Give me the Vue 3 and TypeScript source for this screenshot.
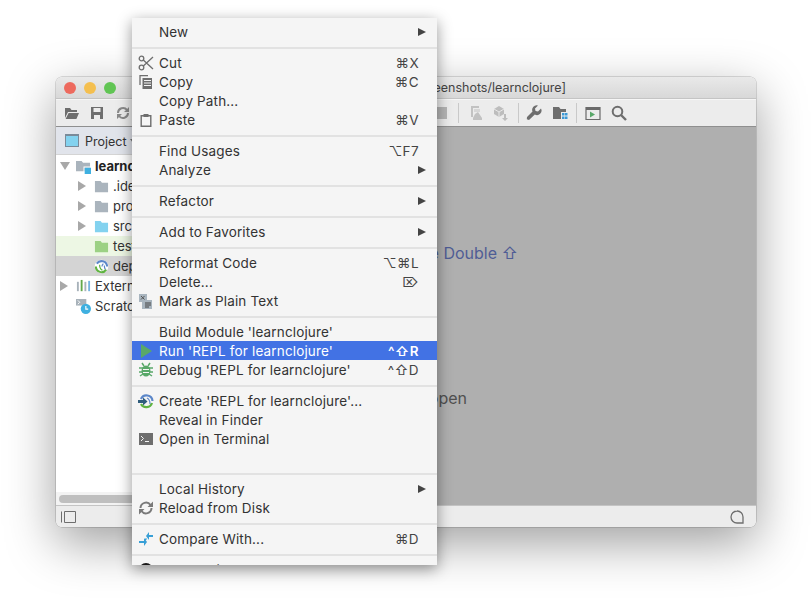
<script setup lang="ts">
interface Item { label?: string; icon?: string; key?: string; sub?: boolean; active?: boolean; blank?: boolean; sep?: boolean }
const items: Item[] = [
  { label: 'New', sub: true }, { sep: true },
  { label: 'Cut', icon: 'cut', key: '⌘X' },
  { label: 'Copy', icon: 'copy', key: '⌘C' },
  { label: 'Copy Path...' },
  { label: 'Paste', icon: 'paste', key: '⌘V' }, { sep: true },
  { label: 'Find Usages', key: '⌥F7' },
  { label: 'Analyze', sub: true }, { sep: true },
  { label: 'Refactor', sub: true }, { sep: true },
  { label: 'Add to Favorites', sub: true }, { sep: true },
  { label: 'Reformat Code', key: '⌥⌘L' },
  { label: 'Delete...', key: '⌦' },
  { label: 'Mark as Plain Text', icon: 'plain' }, { sep: true },
  { label: "Build Module 'learnclojure'" },
  { label: "Run 'REPL for learnclojure'", icon: 'run', key: '^⇧R', active: true },
  { label: "Debug 'REPL for learnclojure'", icon: 'debug', key: '^⇧D' }, { sep: true },
  { label: "Create 'REPL for learnclojure'...", icon: 'create' },
  { label: 'Reveal in Finder' },
  { label: 'Open in Terminal', icon: 'terminal' },
  { blank: true }, { sep: true },
  { label: 'Local History', sub: true },
  { label: 'Reload from Disk', icon: 'reload' }, { sep: true },
  { label: 'Compare With...', icon: 'compare', key: '⌘D' }, { sep: true },
  { label: 'Create Gist...', icon: 'gist' },
]
interface Row { name: string; indent: number; arrow?: 'open' | 'closed'; icon: string; cls?: string; bold?: boolean }
const rows: Row[] = [
  { name: 'learnclojure', indent: 0, arrow: 'open', icon: 'module', bold: true },
  { name: '.idea', indent: 1, arrow: 'closed', icon: 'folder' },
  { name: 'project', indent: 1, arrow: 'closed', icon: 'folder' },
  { name: 'src', indent: 1, arrow: 'closed', icon: 'src' },
  { name: 'test', indent: 1, icon: 'test', cls: 'green' },
  { name: 'deps.edn', indent: 1, icon: 'clj', cls: 'grey' },
  { name: 'External Libraries', indent: 0, arrow: 'closed', icon: 'libs' },
  { name: 'Scratches and Consoles', indent: 0, icon: 'scratch' },
]
</script>

<template>
  <div class="desktop">
    <section class="window">
      <header class="titlebar">
        <span class="light red"></span><span class="light yellow"></span><span class="light green-l"></span>
        <span class="title">learnclojure [~/Documents/screenshots/learnclojure]</span>
      </header>
      <div class="toolbar">
        <svg class="tool t1" viewBox="0 0 16 16"><path fill="#6e6e6e" d="M1 3h5l1.500 2H13v2H4L1 13zM4.600 8H15l-2.600 6H1.600z"/></svg>
        <svg class="tool" viewBox="0 0 16 16"><path fill="#6e6e6e" fill-rule="evenodd" d="M2 2h12v12H2zM4.500 3v4h7V3zM5 10v4h6v-4z"/></svg>
        <svg class="tool" viewBox="0 0 16 16"><path fill="none" stroke="#8a8a8a" stroke-width="2" d="M3 8a5 5 0 0 1 9-3M13 8a5 5 0 0 1-9 3"/><path fill="#8a8a8a" d="M14 2v5H9zM2 14V9h5z"/></svg>
        <span class="spacer"></span>
        <span class="stop"></span>
        <i class="tsep"></i>
        <svg class="tool t2" viewBox="0 0 16 16"><path fill="#c2c2c2" d="M3 1h8v2H5v9H3zM7 9l3-2 4 6v2H5v-2z"/><path fill="#c2c2c2" d="M6 4h6v3H6z" opacity=".5"/></svg>
        <svg class="tool t3" viewBox="0 0 16 16"><path fill="#bdbdbd" d="M1 4l5-3 5 3v5l-5 3-5-3z"/><path fill="none" stroke="#e8e8e8" d="M1 4l5 3 5-3M6 7v5"/><path fill="#bdbdbd" d="M11 9h2v4h2l-3 3-3-3h2z"/></svg>
        <i class="tsep s2"></i>
        <svg class="tool t4" viewBox="0 0 16 16"><path fill="#6e6e6e" d="M15 3.500l-3 3-2.500-.5-.5-2.500 3-3a4.500 4.500 0 0 0-5.500 6L1 12l-.2 2.200L3 15l5.800-5.500a4.500 4.500 0 0 0 6.200-6z"/></svg>
        <svg class="tool t5" viewBox="0 0 16 16"><path fill="#6e6e6e" d="M1 2h6l1.500 2H14v3H9v7H1z"/><path fill="#3c99d6" d="M10 8h2.500v2.500H10zM13 8h2.500v2.500H13zM10 11.500h2.500V14H10zM13 11.500h2.500V14H13z"/></svg>
        <i class="tsep s3"></i>
        <svg class="tool t6" viewBox="0 0 16 16"><path fill="none" stroke="#6a6a6a" stroke-width="1.200" d="M1 2.500h14v12H1z"/><path fill="#6a6a6a" d="M1 2.500h14V5H1z"/><path fill="#59a869" d="M5 6.500l5 3-5 3z"/></svg>
        <svg class="tool t7" viewBox="0 0 16 16"><circle cx="6.500" cy="6.500" r="4.800" fill="none" stroke="#6e6e6e" stroke-width="2"/><path stroke="#6e6e6e" stroke-width="2.400" d="M10 10l5 5"/></svg>
      </div>
      <div class="body">
        <aside class="side">
          <div class="panehead">
            <span class="paneicon"></span><span class="panename">Project</span><span class="caret"></span>
          </div>
          <div class="tree">
            <div v-for="r in rows" :key="r.name" class="row" :class="[r.cls, 'i' + r.indent]">
              <span class="arrow" :class="r.arrow"></span>
              <svg class="ficon" viewBox="0 0 16 16">
                <template v-if="r.icon === 'module'"><path fill="#aab4bd" d="M0 2h6l1.500 2H15v9H0z"/><path fill="#3fb0e0" d="M9 9h7v7H9z"/><path fill="#fff" d="M8 8h8v1H9v7H8z"/></template>
                <path v-else-if="r.icon === 'folder'" fill="#aab4bd" d="M1 2h6l1.500 2H15v10H1z"/>
                <path v-else-if="r.icon === 'src'" fill="#83d2ef" d="M1 2h6l1.500 2H15v10H1z"/>
                <path v-else-if="r.icon === 'test'" fill="#9cd184" d="M1 2h6l1.500 2H15v10H1z"/>
                <template v-else-if="r.icon === 'clj'"><circle cx="8" cy="8" r="7.300" fill="#fff"/><path fill="none" stroke="#5fb340" stroke-width="2.200" d="M2 8a6 6 0 0 0 11 3.300"/><path fill="none" stroke="#5c87c9" stroke-width="2.200" d="M3 5a6 6 0 0 1 11 3"/><path fill="none" stroke="#5fb340" stroke-width="1.300" d="M6 6c0 3 1 5 3 6"/><path fill="none" stroke="#5c87c9" stroke-width="1.300" d="M10 5c-1 1-1.500 2-1.500 3M11 7c0 2 .5 3 1 4"/></template>
                <template v-else-if="r.icon === 'libs'"><path fill="#a8b2ba" d="M1 3h2v10H1z"/><path fill="#62a84a" d="M5 1h2v12H5z"/><path fill="#a8b2ba" d="M9 3h2v10H9z"/><path fill="#74b4e0" d="M13 2h2v11h-2z"/></template>
                <template v-else><path fill="#a8b2ba" d="M0 0h11v7H0z"/><path fill="none" stroke="#fff" d="M2 1.500l2 2-2 2"/><circle cx="10.500" cy="10.500" r="5.500" fill="#3fb0e0"/><path fill="none" stroke="#fff" stroke-width="1.200" d="M10.500 7.500v3.300h2.500"/></template>
              </svg>
              <span class="rname" :class="{ bold: r.bold }">{{ r.name }}</span>
            </div>
          </div>
          <div class="scroll"><span class="thumb"></span></div>
        </aside>
        <main class="empty">
          <p class="hint blue">Search Everywhere <b>Double ⇧</b></p>
          <p class="hint drop">Drop files here to open</p>
        </main>
      </div>
      <footer class="status">
        <svg class="sicon" width="15" height="12" viewBox="0 0 15 12"><path fill="none" stroke="#6e6e6e" d="M.5 .5v11M3.500 .5h11v11h-11z"/></svg>
        <svg class="bubble" width="14" height="14" viewBox="0 0 14 14"><path fill="none" stroke="#6e6e6e" stroke-width="1.300" d="M7 1a5.800 5.800 0 0 1 6 6v6H7a6 6 0 0 1 0-12z"/></svg>
      </footer>
    </section>

    <nav class="menu">
      <template v-for="(it, i) in items" :key="i">
        <div v-if="it.sep" class="sep"></div>
        <div v-else class="item" :class="{ active: it.active }">
          <span class="micon">
            <svg v-if="it.icon" width="16" height="16" viewBox="0 0 16 16">
              <template v-if="it.icon === 'cut'"><circle cx="3.500" cy="3.500" r="2.300" fill="none" stroke="#6e6e6e" stroke-width="1.300"/><circle cx="3.500" cy="12.500" r="2.300" fill="none" stroke="#6e6e6e" stroke-width="1.300"/><path stroke="#6e6e6e" stroke-width="1.300" d="M5.300 5l9.700 9M5.300 11l9.700-9"/></template>
              <template v-else-if="it.icon === 'copy'"><path fill="none" stroke="#6e6e6e" stroke-width="1.300" d="M2 11V1.700h8"/><path fill="#6e6e6e" d="M4.500 4H14v11H4.500z"/><path fill="#f5f5f5" d="M6 6h7v1H6zM6 8.500h7v1H6zM6 11h7v1H6z"/></template>
              <template v-else-if="it.icon === 'paste'"><path fill="none" stroke="#6e6e6e" stroke-width="1.400" d="M3.200 3.700h9.600v10.600H3.200z"/><path fill="#6e6e6e" d="M5.500 2h5v3h-5z"/></template>
              <template v-else-if="it.icon === 'plain'"><path fill="#a9b5bf" d="M1 1h8v6h5v9H4V9H1z"/><path fill="#a9b5bf" d="M1 1h8v8H1z"/><path stroke="#555" d="M3 3l3.500 3.500M6.500 3L3 6.500"/><path stroke="#444" d="M7 10h6M7 12h6M7 14h4"/></template>
              <path v-else-if="it.icon === 'run'" fill="#59a869" d="M3 1l11 7-11 7z"/>
              <template v-else-if="it.icon === 'debug'"><ellipse cx="8" cy="9" rx="4.500" ry="5.500" fill="#59a869"/><path stroke="#59a869" stroke-width="1.500" d="M1 6h14M1 10h14M2 14l3-2M14 14l-3-2M4 1l2 3M12 1l-2 3"/><path stroke="#f5f5f5" stroke-width="1.200" d="M5 7.500h6M5 10.500h6"/></template>
              <template v-else-if="it.icon === 'create'"><path fill="none" stroke="#5c87c9" stroke-width="2.200" d="M3 6a6 6 0 0 1 11.500 2"/><path fill="none" stroke="#5fb340" stroke-width="2.200" d="M3 11a6 6 0 0 0 11-1"/><path fill="none" stroke="#5c87c9" stroke-width="1.200" d="M9 5c2 1 3 3 3 6"/><path fill="#2f5d7c" d="M0 7h5V4.500L9.500 8.500 5 12.500V10H0z"/></template>
              <template v-else-if="it.icon === 'terminal'"><path fill="#6e6e6e" d="M1 2h14v12H1z"/><path fill="none" stroke="#f5f5f5" d="M3 5l2.500 2.500L3 10M7 10.500h4"/></template>
              <template v-else-if="it.icon === 'reload'"><path fill="none" stroke="#7a7a7a" stroke-width="2" d="M2.500 8a5.500 5.500 0 0 1 10-3M13.500 8a5.500 5.500 0 0 1-10 3"/><path fill="#7a7a7a" d="M15 1.500V7H9.500zM1 14.500V9h5.500z"/></template>
              <template v-else-if="it.icon === 'compare'"><path fill="#389fd6" d="M1 10h5V7l3 4-3 4v-3H1zM15 4h-4V1L8 5l3 4V6h4z"/><path fill="#389fd6" d="M6 9l2-2 1 1-2 2z"/></template>
              <circle v-else cx="8" cy="8" r="7" fill="#181717"/>
            </svg>
          </span>
          <span class="mlabel">{{ it.label }}</span>
          <span v-if="it.key" class="mkey">{{ it.key }}</span>
          <span v-if="it.sub" class="msub"></span>
        </div>
      </template>
    </nav>
  </div>
</template>

<style>
html, body { margin: 0; background: #fff; overflow: hidden; }
</style>

<style scoped>
.desktop { position: relative; width: 812px; height: 601px; overflow: hidden; background: #fff; font-family: Inter, "DejaVu Sans", sans-serif; font-size: 13px; color: #333; }
.desktop::before { content: ""; position: absolute; left: 56px; top: 77px; width: 700px; height: 450px; border-radius: 6px; box-shadow: 0 0 0 .5px rgba(0,0,0,.25), 0 16px 50px rgba(0,0,0,.38); }
.window { position: absolute; left: 56px; top: 77px; width: 700px; height: 450px; display: flex; flex-direction: column; border-radius: 6px; overflow: hidden; }
.titlebar { position: relative; flex: 0 0 21px; display: flex; align-items: center; gap: 8px; padding-left: 8px; background: linear-gradient(#e9e9e9, #d8d8d8); }
.light { width: 12px; height: 12px; border-radius: 50%; }
.red { background: #ed6a5e; } .yellow { background: #f4bf4f; } .green-l { background: #61c554; }
.title { position: absolute; left: 7px; right: 0; text-align: center; font-size: 12.500px; color: #444; }
.toolbar { flex: 0 0 29px; box-sizing: border-box; display: flex; align-items: center; padding-left: 8px; background: #ececec; border-top: 1px solid #c4c4c4; border-bottom: 1px solid #8f8f8f; box-shadow: inset 0 1px 0 #f6f6f6; }
.tool { width: 16px; height: 16px; flex: none; margin-right: 10px; }
.t1 { margin-right: 9px; }
.spacer { width: 292px; flex: none; }
.stop { width: 14px; height: 12px; background: #b5b5b5; flex: none; }
.tsep { width: 1px; height: 20px; background: #c9c9c9; margin: 0 9px 0 11px; flex: none; }
.s2 { margin-left: -1px; margin-right: 7px; }
.s3 { margin-left: -2px; margin-right: 8px; }
.t2 { margin-right: 9px; }
.body { flex: 1; display: flex; min-height: 0; }
.side { flex: 0 0 200px; display: flex; flex-direction: column; background: #fff; }
.panehead { flex: 0 0 27px; display: flex; align-items: center; gap: 6px; padding-left: 9px; background: #e1e4eb; border-bottom: 1px solid #d4d4d4; }
.paneicon { width: 12px; height: 10px; background: #83d2ef; border: 1px solid #7a8a99; border-top-width: 2px; }
.panename { font-size: 12.500px; color: #333; padding-top: 1px; }
.caret { border: 3px solid transparent; border-top: 4px solid #777; margin-top: 4px; margin-left: -3px; }
.tree { flex: 1; padding-top: 1px; }
.row { height: 20px; display: flex; align-items: center; padding-left: 4px; white-space: nowrap; overflow: hidden; }
.row.i1 { padding-left: 22px; }
.row.green { background: #edf7e4; }
.row.grey { background: #d4d4d4; }
.arrow { width: 11px; flex: none; margin-right: 5px; height: 9px; }
.arrow.closed { width: 0; height: 0; border-left: 8px solid #a8a8a8; border-top: 5px solid transparent; border-bottom: 5px solid transparent; margin-right: 8px; }
.arrow.open { width: 0; height: 0; border-top: 8px solid #a8a8a8; border-left: 5px solid transparent; border-right: 5px solid transparent; margin-right: 6px; }
.ficon { width: 15px; height: 15px; flex: none; margin-right: 4px; }
.rname { font-size: 13px; color: #333; }
.bold { font-weight: 700; color: #222; }
.scroll { flex: 0 0 13px; display: flex; align-items: center; padding-left: 3px; background: #f3f3f3; }
.thumb { width: 190px; height: 8px; border-radius: 4px; background: #bfbfbf; }
.empty { flex: 1; background: #afafaf; box-sizing: border-box; padding-top: 116px; display: flex; flex-direction: column; align-items: flex-end; }
.hint { margin: 0; font-size: 16px; white-space: nowrap; }
.blue { color: #4f5d95; margin-right: 238px; }
.blue b { font-weight: 400; }
.drop { color: #505050; margin-top: 125px; margin-right: 289px; }
.status { flex: 0 0 22px; box-sizing: border-box; display: flex; align-items: center; justify-content: space-between; padding: 0 12px 0 5px; background: #ececec; border-top: 1px solid #c4c4c4; }
.menu { position: absolute; left: 132px; top: 18px; width: 305px; height: 547px; box-sizing: border-box; padding-top: 4px; overflow: hidden; background: #f5f5f5; box-shadow: 0 4px 14px rgba(0,0,0,.42); }
.item { height: 19px; display: flex; align-items: center; padding-left: 6px; white-space: nowrap; font-size: 13.500px; letter-spacing: .15px; color: #333; }
.item.active { background: #4272e4; color: #fff; }
.micon { width: 16px; height: 16px; flex: none; margin-right: 5px; display: flex; }
.mlabel { flex: 1; }
.mkey { margin-right: 18px; color: #444; letter-spacing: .4px; }
.active .mkey { color: #fff; font-weight: 600; }
.msub { width: 0; height: 0; border-left: 8px solid #444; border-top: 4.500px solid transparent; border-bottom: 4.500px solid transparent; margin-right: 11px; }
.sep { height: 12px; box-sizing: border-box; padding-top: 6px; }
.sep::after { content: ""; display: block; height: 2px; background: #e2e2e2; }
</style>
